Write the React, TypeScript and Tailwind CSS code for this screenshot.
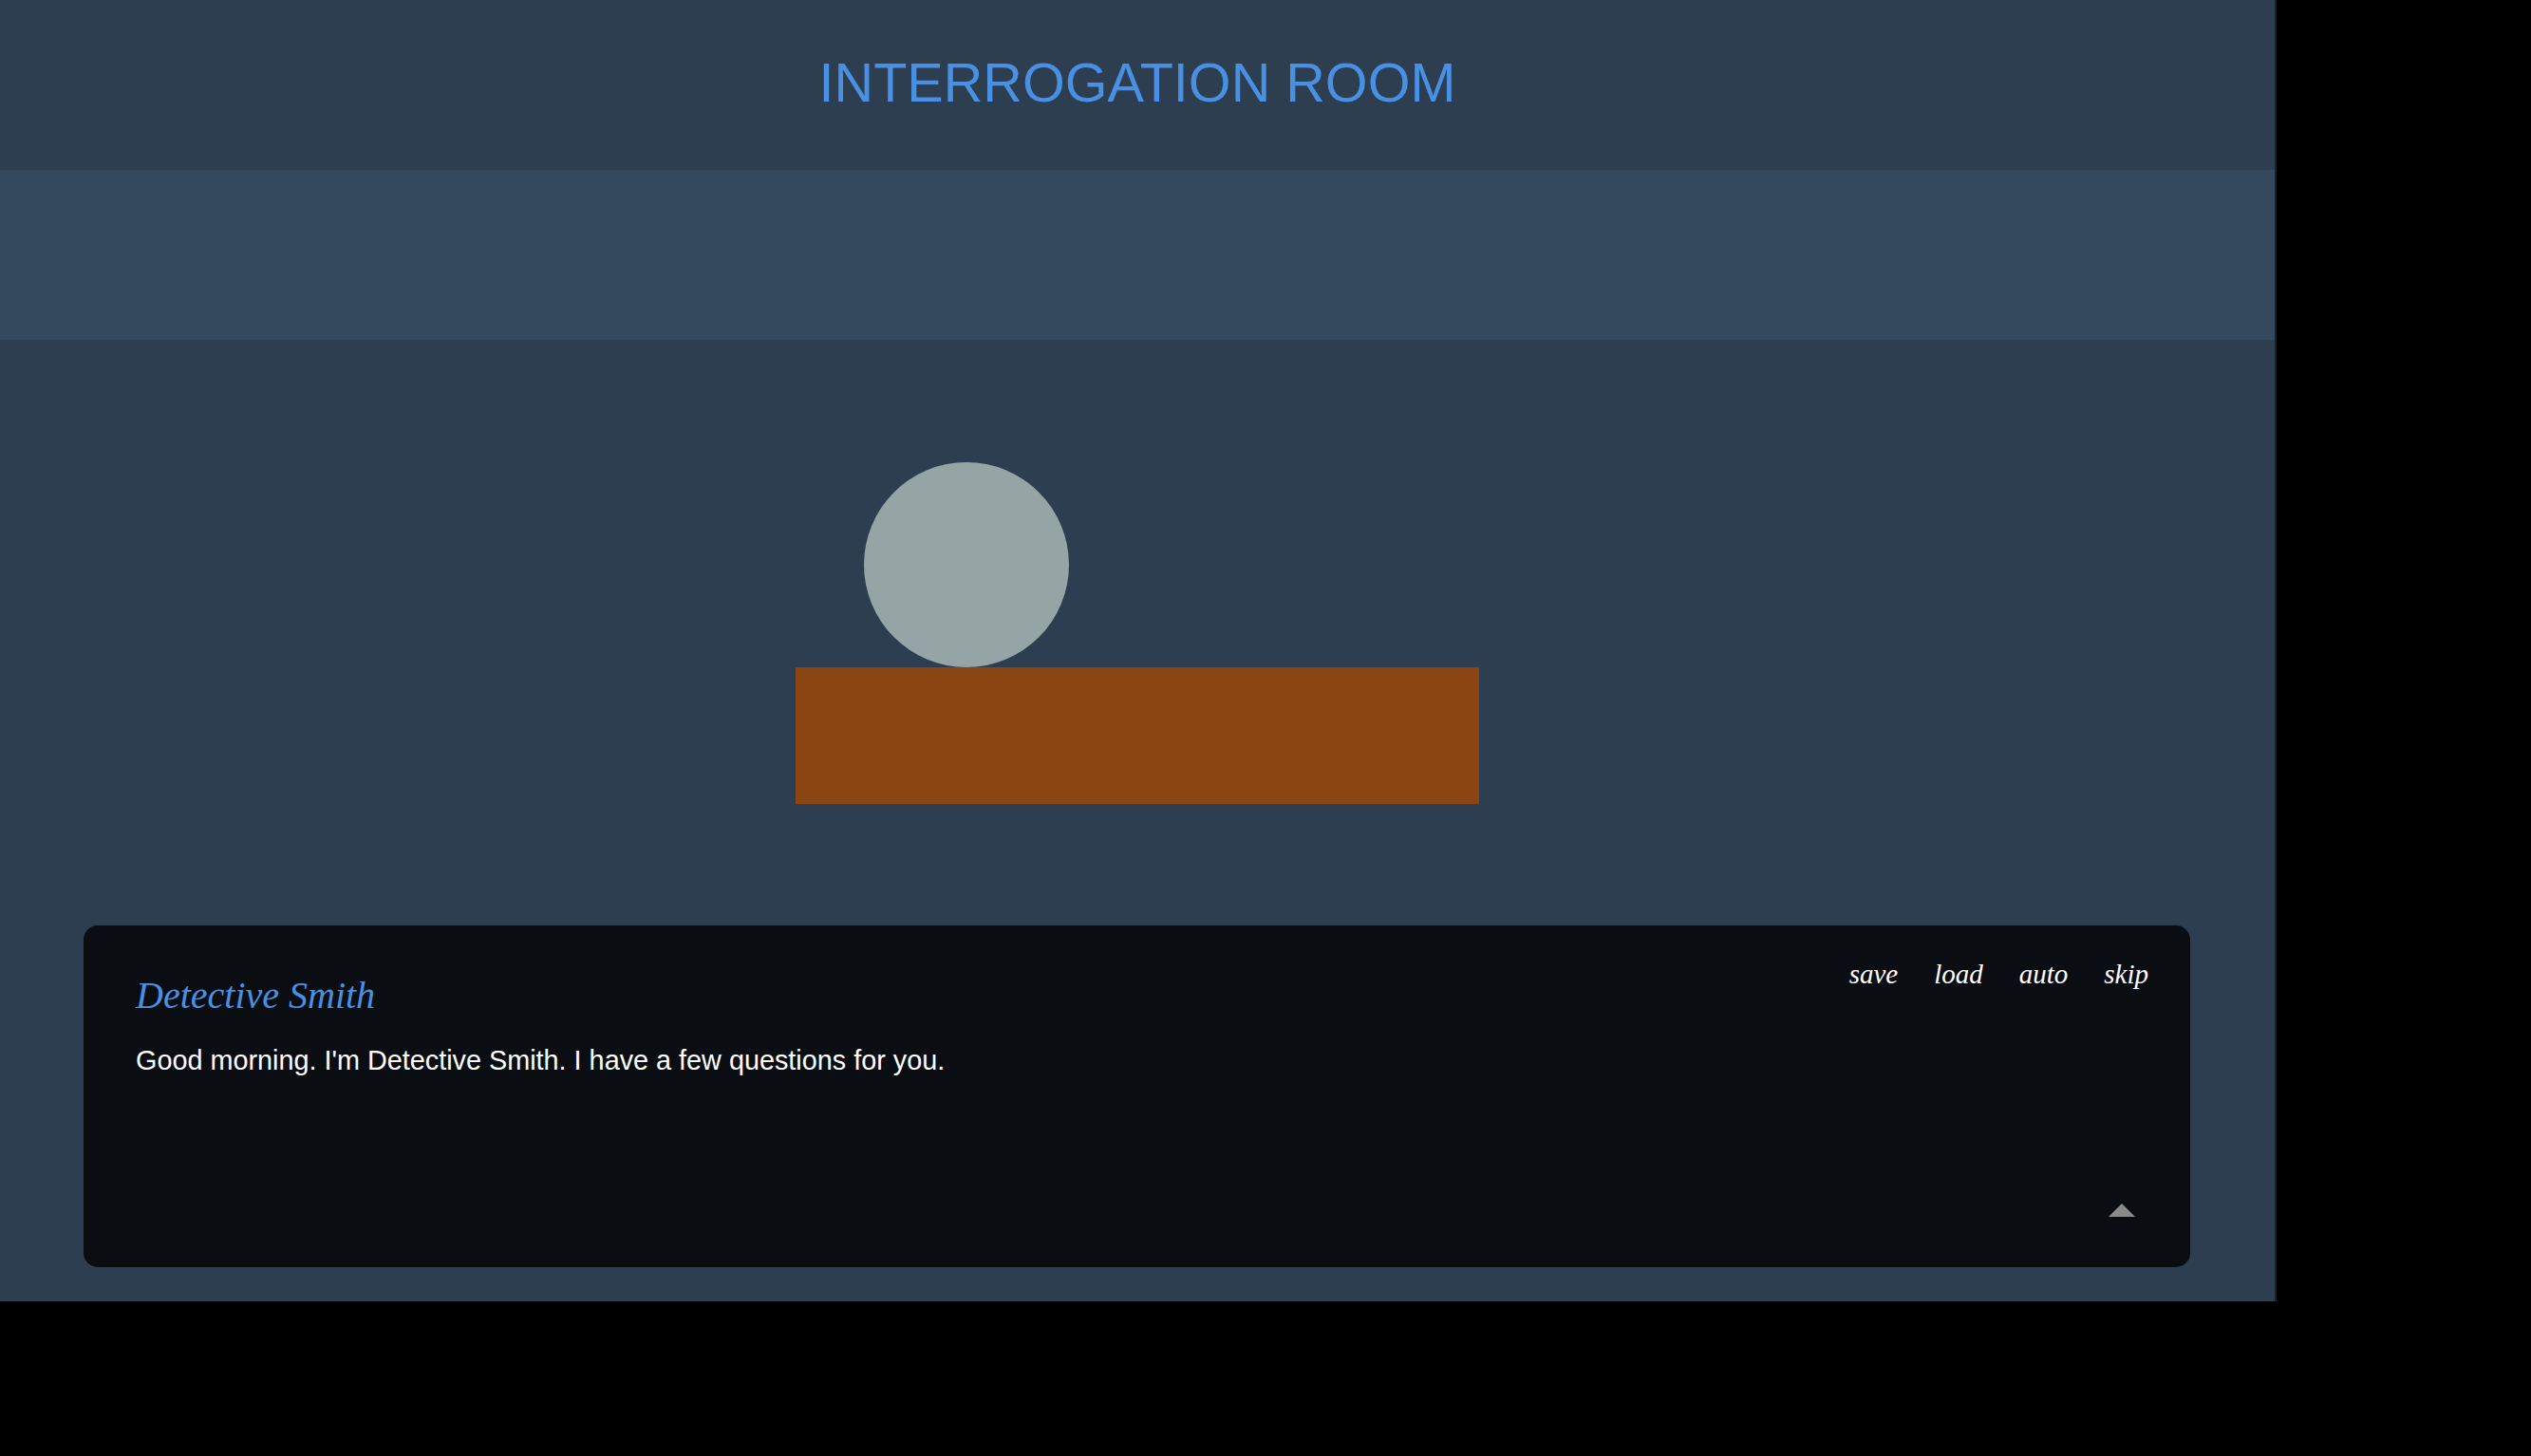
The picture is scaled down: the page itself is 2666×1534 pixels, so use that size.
import React from 'react';

const controls = ['save', 'load', 'auto', 'skip'];

const App: React.FC = () => {
  return (
    <div className="min-h-screen bg-black" style={{ fontFamily: '"Liberation Sans", Arial, sans-serif' }}>
      <div className="w-[2398px] h-[1371px] bg-[#2c3e50] flex flex-col border-r-2 border-[#18212b]">
        <header className="h-[179px] flex items-center justify-center">
          <h1 className="text-[57.6px] text-[#4a90e2] leading-none pb-[4px]">INTERROGATION ROOM</h1>
        </header>

        <div className="h-[179px] bg-[#34495e]" />

        {/* scene */}
        <div className="flex justify-center pt-[129px]">
          <div className="w-[720px] flex flex-col">
            <div className="ml-[72px] w-[216px] h-[216px] rounded-full bg-[#95a5a6]" />
            <div className="h-[144px] bg-[#8b4513]" />
          </div>
        </div>

        {/* dialogue box */}
        <div className="mt-[128px] ml-[88px] w-[2219px] h-[360px] rounded-[15px] bg-[#0a0d12] flex flex-col pt-[35px] pl-[55px] pr-[44px] pb-[53px]">
          <div className="flex justify-between items-start">
            <div
              className="mt-[16px] text-[40px] italic text-[#4a90e2] leading-[46px]"
              style={{ fontFamily: '"Liberation Serif", serif' }}
            >
              Detective Smith
            </div>
            <div
              className="flex gap-[38px] text-[29px] italic text-white leading-[33px]"
              style={{ fontFamily: '"Liberation Serif", serif' }}
            >
              {controls.map((c) => (
                <span key={c}>{c}</span>
              ))}
            </div>
          </div>
          <p className="mt-[29px] text-[28.8px] text-white leading-[32px]">
            Good morning. I'm Detective Smith. I have a few questions for you.
          </p>
          <div className="mt-auto self-end mr-[14px] w-0 h-0 border-x-[14px] border-x-transparent border-b-[14px] border-b-[#8a8a8a]" />
        </div>
      </div>
    </div>
  );
};

export default App;
